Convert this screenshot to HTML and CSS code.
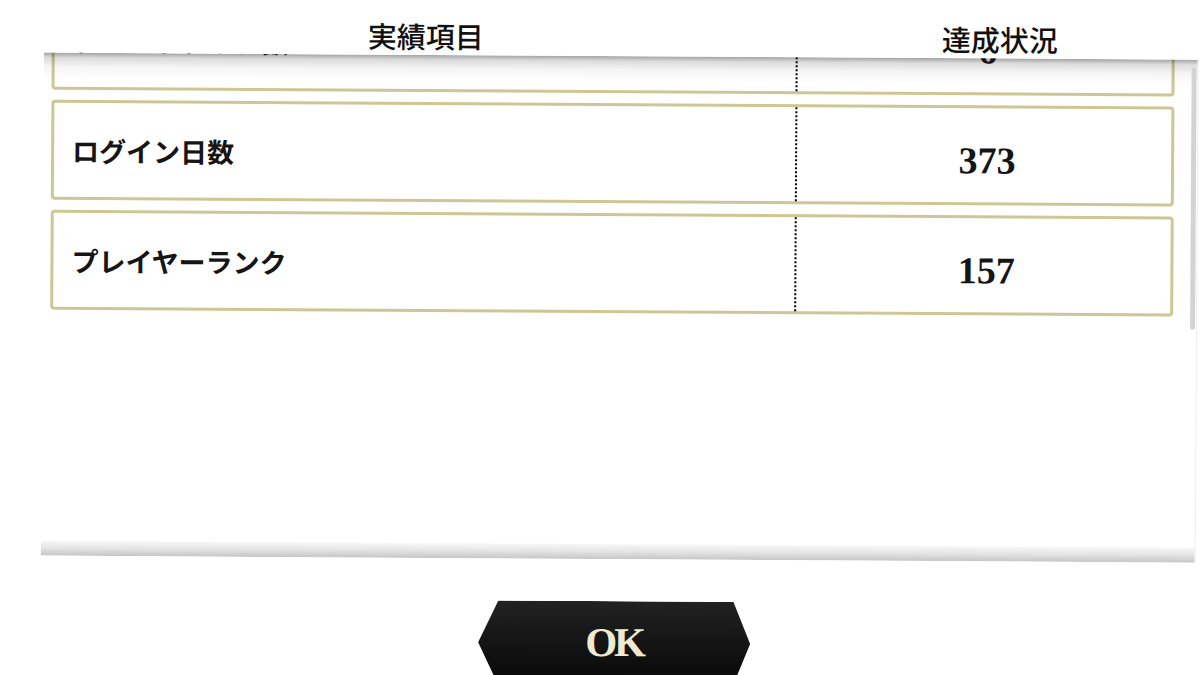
FILE: index.html
```html
<!DOCTYPE html>
<html lang="ja">
<head>
<meta charset="utf-8">
<title>実績</title>
<link rel="stylesheet" href="styles.css">
</head>
<body>
<div class="stage">
  <div class="header">
    <div class="head-cell">実績項目</div>
    <div class="head-cell">達成状況</div>
  </div>
  <div class="panel">
    <div class="list">
      <div class="row">
        <div class="label">クエストクリア数</div>
        <div class="value">6</div>
      </div>
      <div class="row">
        <div class="label">ログイン日数</div>
        <div class="value">373</div>
      </div>
      <div class="row">
        <div class="label">プレイヤーランク</div>
        <div class="value">157</div>
      </div>
    </div>
    <div class="scrollbar"></div>
  </div>
  <div class="footer">
    <button class="ok">OK</button>
  </div>
</div>
</body>
</html>
```
FILE: styles.css
```css
html, body {
  margin: 0;
  padding: 0;
  background: #ffffff;
  overflow: hidden;
}

.stage {
  width: 1200px;
  height: 675px;
  transform: rotate(0.35deg);
  transform-origin: 600px 337px;
  display: flex;
  flex-direction: column;
}

.header {
  flex-shrink: 0;
  height: 56px;
  box-sizing: border-box;
  padding: 22px 0 0 50px;
  display: grid;
  grid-template-columns: 748px 400px;
  font-family: "Noto Sans CJK JP", "Noto Sans", sans-serif;
  font-size: 29px;
  line-height: 29px;
  font-weight: 500;
  color: #111111;
}

.head-cell {
  text-align: center;
}

.panel {
  flex-shrink: 0;
  position: relative;
  margin-left: 42px;
  width: 1154px;
  height: 503px;
  overflow: hidden;
  background: #ffffff;
  border-right: 1px solid #eeeeee;
}

.panel::before {
  content: "";
  position: absolute;
  left: 0;
  right: 0;
  top: 0;
  height: 26px;
  background: linear-gradient(to bottom, rgba(0,0,0,0.36) 0, rgba(0,0,0,0.14) 5px, rgba(0,0,0,0.04) 14px, rgba(0,0,0,0) 26px);
  z-index: 2;
}

.panel::after {
  content: "";
  position: absolute;
  left: 0;
  right: 0;
  bottom: 0;
  height: 15px;
  background: linear-gradient(to bottom, #f8f8f8 0, #e4e4e4 50%, #c6c6c6 100%);
  z-index: 2;
}

.list {
  margin-top: -63px;
  padding: 0 23px 0 8px;
  display: flex;
  flex-direction: column;
  gap: 10px;
}

.row {
  height: 100px;
  box-sizing: border-box;
  border: 3px solid #cec795;
  border-radius: 4px;
  display: grid;
  grid-template-columns: 741px 1fr;
  background: #ffffff;
}

.label {
  display: flex;
  align-items: center;
  padding: 0 0 0 18px;
  font-family: "Noto Sans CJK JP", "Noto Sans", sans-serif;
  font-size: 27px;
  font-weight: 700;
  color: #151515;
}

.value {
  display: flex;
  align-items: center;
  justify-content: center;
  padding: 10px 0 0 6px;
  border-left: 2px dotted #000000;
  font-family: "Liberation Serif", serif;
  font-size: 38px;
  font-weight: 700;
  color: #151515;
}

.scrollbar {
  position: absolute;
  right: 1px;
  top: 8px;
  width: 5px;
  height: 262px;
  background: #d3d3d3;
  border-radius: 2px;
  z-index: 3;
}

.footer {
  flex-shrink: 0;
  display: flex;
  justify-content: center;
  padding-top: 42px;
  padding-left: 32px;
}

.ok {
  flex-shrink: 0;
  width: 272px;
  height: 84px;
  border: none;
  padding: 0 0 2px 0;
  clip-path: polygon(20px 0, calc(100% - 17px) 0, 100% 50%, calc(100% - 17px) 100%, 20px 100%, 0 50%);
  background: linear-gradient(to bottom, #222222 0, #171717 40%, #080808 100%);
  color: #efe9cf;
  font-family: "Liberation Serif", serif;
  font-size: 41px;
  letter-spacing: -3px;
  font-weight: 700;
  line-height: 1;
}
```
